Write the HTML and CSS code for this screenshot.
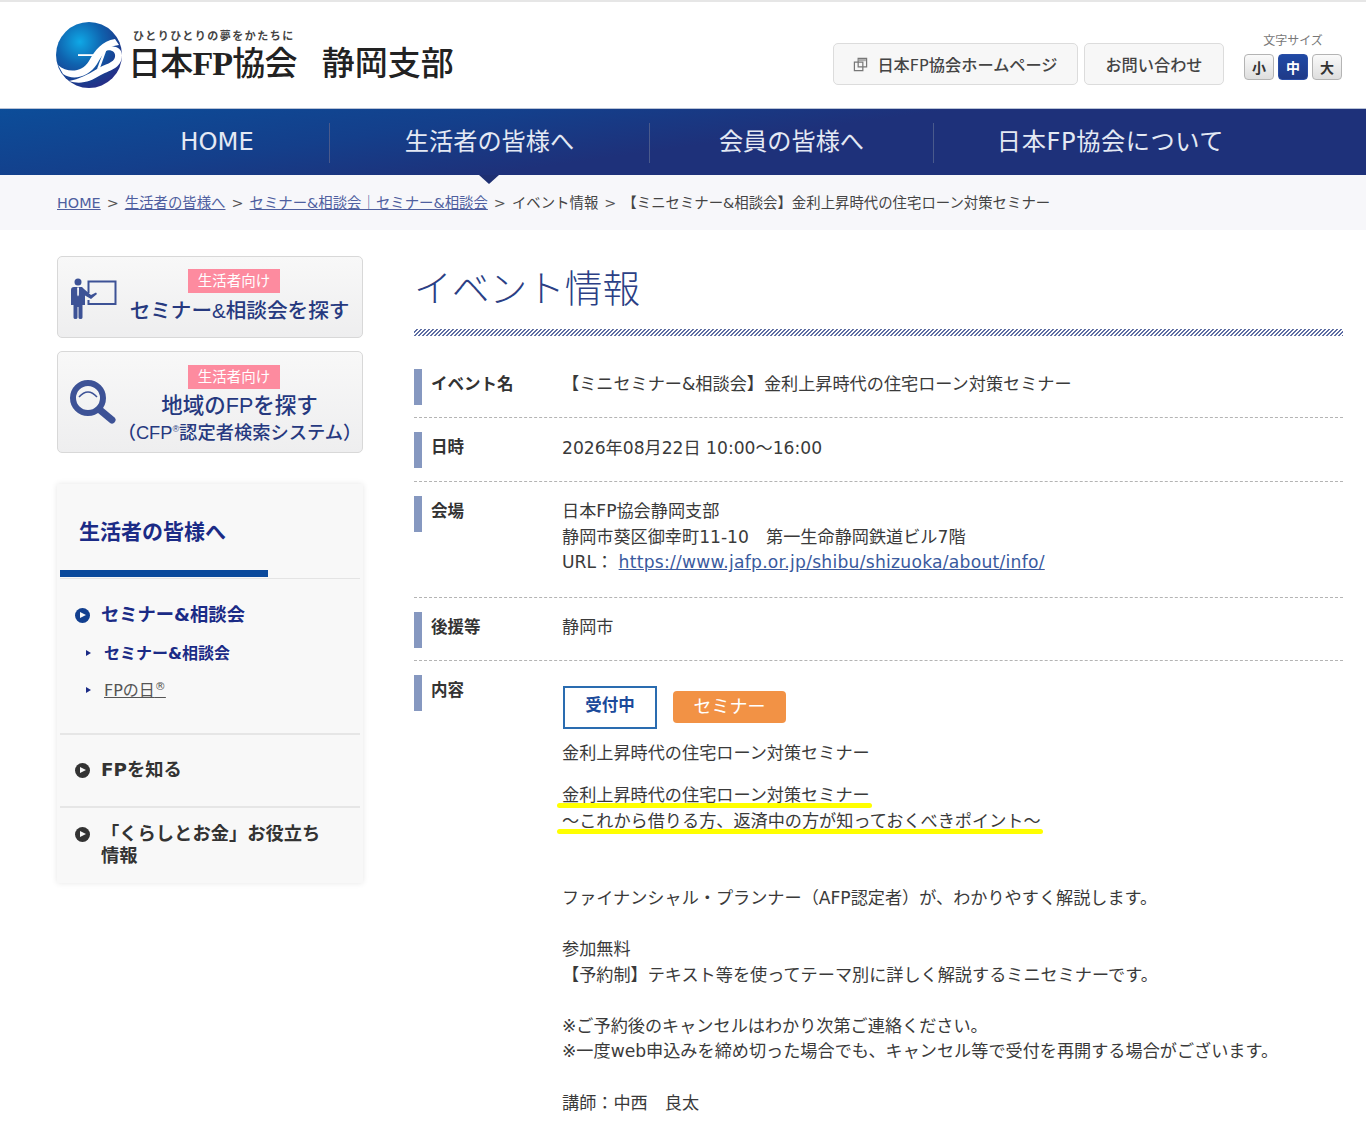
FILE: index.html
```html
<!DOCTYPE html>
<html lang="ja">
<head>
  <meta charset="UTF-8">
  <meta name="viewport" content="width=device-width, initial-scale=1.0">
  <title>イベント情報 | 日本FP協会 静岡支部</title>
  <link rel="stylesheet" href="styles.css">
</head>
<body>
  <header class="header">
    <a class="logo" href="#">
      <svg class="logo-mark" viewBox="0 0 68 68" width="68" height="68" aria-hidden="true">
        <defs>
          <radialGradient id="globe" cx="0.36" cy="0.3" r="0.78">
            <stop offset="0" stop-color="#0fa8e6"/>
            <stop offset="0.45" stop-color="#0f62ae"/>
            <stop offset="0.8" stop-color="#1b3a8c"/>
            <stop offset="1" stop-color="#2a2a86"/>
          </radialGradient>
        </defs>
        <circle cx="34" cy="34" r="33" fill="url(#globe)"/>
        <path d="M3 44 C12 52 27 52 34 40 C40 29 47 20 60 18 L64 24 C52 25 48 33 42 43 C34 56 18 60 8 53 Z" fill="#fff"/>
        <path d="M14 60 C26 64 36 60 44 55 C54 49 67 48 67 34 C67 27 60 24 53 26 L50 30 C56 28 61 31 60 36 C59 42 50 43 42 48 C32 54 24 58 14 60 Z" fill="#fff"/>
        <path d="M23 33.200 H46 V35 H23 Z" fill="#fff"/>
        <path d="M42 48 L49 29 L51.500 29 L45 47 Z" fill="#fff"/>
      </svg>
      <span class="logo-text">
        <span class="logo-catch">ひとりひとりの夢をかたちに</span>
        <span class="logo-name"><span class="logo-org">日本<span class="logo-fp">FP</span>協会</span><span class="logo-branch">静岡支部</span></span>
      </span>
    </a>
    <div class="header-tools">
      <a class="tool-btn tool-home" href="#">
        <svg viewBox="0 0 16 16" width="15" height="15" aria-hidden="true">
          <path d="M5.500 1.500h9v9h-9z M1.500 5.500h9v9h-9z" fill="none" stroke="#777" stroke-width="1.300"/>
          <path d="M6.200 2.200h7.600v2.300H6.200z" fill="#aaa"/>
        </svg>
        日本FP協会ホームページ
      </a>
      <a class="tool-btn tool-contact" href="#">お問い合わせ</a>
      <div class="font-size">
        <div class="font-size-label">文字サイズ</div>
        <div class="font-size-btns">
          <button class="size-btn">小</button>
          <button class="size-btn active">中</button>
          <button class="size-btn">大</button>
        </div>
      </div>
    </div>
  </header>

  <nav class="gnav">
    <a class="gnav-item gnav-home" href="#">HOME</a>
    <a class="gnav-item gnav-citizen current" href="#">生活者の皆様へ</a>
    <a class="gnav-item gnav-member" href="#">会員の皆様へ</a>
    <a class="gnav-item gnav-about" href="#">日本FP協会について</a>
  </nav>

  <div class="breadcrumb">
    <a href="#">HOME</a><span class="sep">&gt;</span><a href="#">生活者の皆様へ</a><span class="sep">&gt;</span><a href="#">セミナー&amp;相談会｜セミナー&amp;相談会</a><span class="sep">&gt;</span><span>イベント情報</span><span class="sep">&gt;</span><span>【ミニセミナー&amp;相談会】金利上昇時代の住宅ローン対策セミナー</span>
  </div>

  <div class="page">
    <aside class="side">
      <a class="side-btn side-btn-seminar" href="#">
        <svg class="side-icon" viewBox="0 0 48 44" width="48" height="44" aria-hidden="true">
          <circle cx="9" cy="7" r="3.500" fill="#3d5296"/>
          <path d="M2 15 Q2 12 5 12 H13 L15 14 L22 20 L27 17.500 L28 19 L22 24 L16 20.500 V30 H13.500 V42.500 Q13.500 44 11.500 44 Q9.500 44 9.500 42.500 V32 H8.500 V42.500 Q8.500 44 6.500 44 Q4.500 44 4.500 42.500 V30 H2 Z" fill="#3d5296"/>
          <path d="M8.200 12.500 H10 L9.800 20 L9 21.500 L8.300 20 Z" fill="#fff"/>
          <path d="M19.500 18 V6.500 H46.500 V29 H19.500 V25" fill="none" stroke="#3d5296" stroke-width="2"/>
        </svg>
        <span class="side-btn-body">
          <span class="side-tag">生活者向け</span>
          <span class="side-btn-title">セミナー&amp;相談会を探す</span>
        </span>
      </a>
      <a class="side-btn side-btn-search" href="#">
        <svg class="side-icon" viewBox="0 0 48 48" width="48" height="48" aria-hidden="true">
          <circle cx="19" cy="20" r="15" fill="none" stroke="#3d5296" stroke-width="6"/>
          <path d="M10 19 Q19 9 28 19" fill="none" stroke="#3d5296" stroke-width="1.500"/>
          <path d="M31 32 L43 42" stroke="#3d5296" stroke-width="7" stroke-linecap="round"/>
        </svg>
        <span class="side-btn-body">
          <span class="side-tag">生活者向け</span>
          <span class="side-btn-title">地域のFPを探す</span>
          <span class="side-btn-sub">（CFP<sup>®</sup>認定者検索システム）</span>
        </span>
      </a>

      <div class="side-menu">
        <h2 class="side-menu-title">生活者の皆様へ</h2>
        <div class="side-group side-group-open">
          <a class="side-link side-link-on" href="#">セミナー&amp;相談会</a>
          <ul class="side-sub">
            <li><a class="on" href="#">セミナー&amp;相談会</a></li>
            <li><a href="#">FPの日<sup>®</sup></a></li>
          </ul>
        </div>
        <div class="side-group">
          <a class="side-link" href="#">FPを知る</a>
        </div>
        <div class="side-group side-group-last">
          <a class="side-link" href="#">「くらしとお金」お役立ち情報</a>
        </div>
      </div>
    </aside>

    <main class="main">
      <h1 class="page-title">イベント情報</h1>
      <dl class="event">
        <div class="event-row event-row-name">
          <dt>イベント名</dt>
          <dd>【ミニセミナー&amp;相談会】金利上昇時代の住宅ローン対策セミナー</dd>
        </div>
        <div class="event-row event-row-date">
          <dt>日時</dt>
          <dd>2026年08月22日 10:00～16:00</dd>
        </div>
        <div class="event-row event-row-place">
          <dt>会場</dt>
          <dd>日本FP協会静岡支部<br>静岡市葵区御幸町11-10　第一生命静岡鉄道ビル7階<br>URL： <a href="#">https://www.jafp.or.jp/shibu/shizuoka/about/info/</a></dd>
        </div>
        <div class="event-row event-row-support">
          <dt>後援等</dt>
          <dd>静岡市</dd>
        </div>
        <div class="event-row event-row-body">
          <dt>内容</dt>
          <dd>
            <div class="tags">
              <span class="tag-status">受付中</span>
              <span class="tag-type">セミナー</span>
            </div>
            <p class="lead">金利上昇時代の住宅ローン対策セミナー</p>
            <p>
              <span class="marker">金利上昇時代の住宅ローン対策セミナー</span><br>
              <span class="marker">～これから借りる方、返済中の方が知っておくべきポイント～</span><br>
              <br>
              <br>
              ファイナンシャル・プランナー（AFP認定者）が、わかりやすく解説します。<br>
              <br>
              参加無料<br>
              【予約制】テキスト等を使ってテーマ別に詳しく解説するミニセミナーです。<br>
              <br>
              ※ご予約後のキャンセルはわかり次第ご連絡ください。<br>
              ※一度web申込みを締め切った場合でも、キャンセル等で受付を再開する場合がございます。<br>
              <br>
              講師：中西　良太
            </p>
          </dd>
        </div>
      </dl>
    </main>
  </div>
</body>
</html>
```

FILE: styles.css
```css
* {
  margin: 0;
  padding: 0;
  box-sizing: border-box;
}
body {
  font-family: "DejaVu Sans", "Noto Sans CJK JP", sans-serif;
  font-size: 17.150px;
  line-height: 25.6px;
  color: #3a3a3a;
  background: #fff;
  overflow: hidden;
}
a {
  color: inherit;
  text-decoration: none;
}

/* header */
.header {
  height: 108px;
  border-top: 2px solid #e6e6e6;
  display: flex;
  justify-content: space-between;
  padding: 0 24px 0 55px;
}
.logo {
  display: flex;
  align-items: flex-start;
  padding-top: 19px;
}
.logo-mark {
  flex: none;
}
.logo-text {
  display: flex;
  flex-direction: column;
  margin-left: 5px;
  color: #222;
}
.logo-catch {
  font-family: "Noto Sans CJK JP", sans-serif;
  font-size: 11px;
  line-height: 14px;
  font-weight: 700;
  color: #444;
  letter-spacing: 1.500px;
  margin: 7px 0 0 5px;
}
.logo-name {
  display: flex;
  font-family: "Liberation Serif", "Noto Sans CJK JP", serif;
  font-weight: 500;
  font-size: 33px;
  line-height: 38px;
  margin-top: 3px;
}
.logo-fp {
  font-size: 34px;
  font-weight: 700;
}
.logo-org {
  letter-spacing: -0.8px;
}
.logo-branch {
  margin-left: 25px;
}
.header-tools {
  display: flex;
  align-items: flex-start;
  padding-top: 41px;
}
.tool-btn {
  height: 42px;
  padding-top: 3px;
  display: flex;
  align-items: center;
  justify-content: center;
  background: #f7f7f7;
  border: 1.500px solid #dcdcdc;
  border-radius: 5px;
  font-size: 16.200px;
  font-weight: 500;
  color: #444;
}
.tool-home {
  width: 245px;
  gap: 9px;
  margin-right: 6px;
}
.tool-home svg {
  margin-top: -3px;
}
.tool-contact {
  width: 140px;
  margin-right: 20px;
}
.font-size {
  width: 98px;
  margin-top: -10px;
}
.font-size-label {
  font-size: 12px;
  line-height: 16px;
  color: #777;
  text-align: center;
}
.font-size-btns {
  display: flex;
  gap: 4px;
  margin-top: 5px;
}
.size-btn {
  width: 30px;
  height: 26px;
  font-family: "Noto Sans CJK JP", sans-serif;
  font-size: 14px;
  font-weight: 700;
  line-height: 1;
  color: #333;
  background: linear-gradient(#fafafa, #dedede);
  border: 1.500px solid #b4b4b4;
  border-radius: 4px;
}
.size-btn.active {
  color: #fff;
  background: linear-gradient(#1f49a5, #1f3a88);
  border-color: #2a4da5;
}

/* global nav */
.gnav {
  height: 67px;
  display: flex;
  padding: 14px 0 0 105px;
  border-top: 1px solid #b9c3d6;
  background: linear-gradient(172deg, #0c4d99 0, #143f8b 30%, #1e317a 52%, #1e317a 100%);
}
.gnav-item {
  position: relative;
  height: 40px;
  display: flex;
  align-items: center;
  justify-content: center;
  font-size: 24.200px;
  color: #e4e9f4;
  border-right: 1px solid #4a5a8c;
}
.gnav-home { width: 225px; }
.gnav-citizen { width: 320px; }
.gnav-member { width: 284px; }
.gnav-about { width: 353px; border-right: none; letter-spacing: 0.6px; }
.gnav-item.current::after {
  content: "";
  position: absolute;
  left: 149px;
  bottom: -21px;
  border-left: 10px solid transparent;
  border-right: 10px solid transparent;
  border-top: 9px solid #1e2f72;
}

/* breadcrumb */
.breadcrumb {
  height: 55px;
  padding: 2px 0 0 57px;
  display: flex;
  align-items: center;
  font-size: 14.400px;
  color: #444;
  background: #f7f7fa;
}
.breadcrumb a {
  color: #4f5f9f;
  text-decoration: underline;
}
.sep {
  margin: 0 6px;
  color: #555;
}

/* layout */
.page {
  display: flex;
  padding: 26px 23px 0 57px;
  gap: 51px;
}
.side {
  width: 306px;
  flex: none;
}
.main {
  flex: 1;
}

/* side buttons */
.side-btn {
  display: flex;
  align-items: center;
  width: 306px;
  margin-bottom: 13px;
  background: linear-gradient(#f8f8f8, #eeeeef);
  border: 1.500px solid #d8d8d8;
  border-radius: 5px;
  color: #26397f;
}
.side-btn-seminar {
  height: 82px;
}
.side-btn-search {
  height: 102px;
}
.side-icon {
  flex: none;
  margin-left: 11px;
}
.side-btn-body {
  flex: 1;
  display: flex;
  flex-direction: column;
  align-items: center;
  font-weight: 500;
  font-family: "Liberation Sans", "Noto Sans CJK JP", sans-serif;
}
.side-tag {
  width: 92px;
  height: 24px;
  line-height: 24px;
  margin-right: 11px;
  text-align: center;
  font-size: 14.500px;
  font-weight: 400;
  color: #fff;
  background: #fd8b9f;
}
.side-btn-title {
  font-size: 21.500px;
  line-height: 30px;
  white-space: nowrap;
}
.side-btn-seminar .side-btn-title {
  font-size: 20.600px;
  margin-top: 3px;
}
.side-btn-search .side-btn-body {
  padding-top: 5px;
}
.side-btn-search .side-tag {
  margin-bottom: 2px;
}
.side-btn-sub {
  font-size: 18.300px;
  line-height: 24px;
  white-space: nowrap;
}
.side-btn-sub sup {
  font-size: 9px;
  line-height: 0;
}

/* side menu */
.side-menu {
  margin-top: 31px;
  width: 306px;
  padding: 0 3px;
  background: #f8f8f8;
  box-shadow: 0 0 6px rgba(0, 0, 0, 0.1);
}
.side-menu-title {
  height: 95px;
  padding: 33px 0 0 19px;
  font-size: 21px;
  line-height: 30px;
  font-weight: 700;
  color: #1b2b86;
  border-bottom: 1px solid #e4e4e4;
  position: relative;
}
.side-menu-title::after {
  content: "";
  position: absolute;
  left: 0;
  bottom: 1px;
  width: 208px;
  height: 7px;
  background: #0b4a9c;
}
.side-group {
  padding: 24px 34px 25px 41px;
  border-bottom: 2px solid #e6e6e6;
}
.side-group-open {
  padding-top: 25px;
  padding-bottom: 16px;
}
.side-group-last {
  padding-top: 15px;
  padding-bottom: 16px;
  border-bottom: none;
}
.side-link {
  display: block;
  position: relative;
  font-size: 18.300px;
  line-height: 22px;
  font-weight: 700;
  color: #333;
}
.side-link::before {
  content: "";
  position: absolute;
  left: -26px;
  top: 4px;
  width: 15px;
  height: 15px;
  border-radius: 50%;
  background: #333;
}
.side-link::after {
  content: "";
  position: absolute;
  left: -21px;
  top: 8px;
  border-left: 6px solid #f8f8f8;
  border-top: 3.500px solid transparent;
  border-bottom: 3.500px solid transparent;
}
.side-link-on {
  color: #1b2b86;
}
.side-link-on::before {
  background: #123f8f;
}
.side-sub {
  list-style: none;
  margin-top: 17px;
}
.side-sub li {
  position: relative;
  font-size: 16px;
  line-height: 22px;
  margin-bottom: 15px;
  margin-left: 3px;
}
.side-sub li::before {
  content: "";
  position: absolute;
  left: -18px;
  top: 7px;
  border-left: 5px solid #1b2b86;
  border-top: 3.500px solid transparent;
  border-bottom: 3.500px solid transparent;
}
.side-sub a {
  color: #555;
  text-decoration: underline;
}
.side-sub a.on {
  color: #1b2b86;
  font-weight: 700;
  text-decoration: none;
}
.side-sub sup {
  font-size: 11px;
  line-height: 0;
}

/* main */
.page-title {
  height: 86px;
  margin-top: -6px;
  font-size: 37.700px;
  line-height: 79px;
  font-weight: 300;
  color: #2b3f85;
}
.page-title::after {
  content: "";
  display: block;
  height: 7px;
  background: linear-gradient(135deg, #fff 25%, #5d6da3 25%, #5d6da3 50%, #fff 50%, #fff 75%, #5d6da3 75%) 0 0 / 4px 4px;
}
.event-row {
  display: flex;
  padding: 14px 0 13px;
  border-bottom: 1px dashed #b4b4b4;
}
.event-row-name {
  padding-top: 33px;
  padding-bottom: 12px;
}
.event-row dt {
  flex: none;
  width: 148px;
  height: 36px;
  padding: 3px 0 0 9px;
  border-left: 8px solid #8698c0;
  font-weight: 700;
  font-size: 16.500px;
  line-height: 26px;
  color: #333;
}
.event-row dd {
  flex: 1;
  padding-top: 3px;
}
.event-row dd a {
  color: #3a5a9e;
  text-decoration: underline;
  letter-spacing: 0.25px;
}
.event-row-date dd {
  padding-top: 4px;
}
.event-row-place {
  padding-bottom: 21px;
}
.event-row-support {
  padding-bottom: 12px;
}
.event-row-body {
  border-bottom: none;
  padding-bottom: 0;
}
.event-row-body dd {
  padding-top: 11px;
}
.tags {
  display: flex;
  align-items: center;
  gap: 16px;
  margin-left: 1px;
}
.tag-status {
  width: 94px;
  height: 43px;
  line-height: 35px;
  text-align: center;
  font-size: 16.500px;
  font-weight: 700;
  color: #1b4a9a;
  background: #fff;
  border: 2px solid #2a6cb0;
}
.tag-type {
  width: 113px;
  height: 32px;
  line-height: 31px;
  text-align: center;
  font-size: 18px;
  color: #fff;
  background: #f29245;
  border-radius: 4px;
}
.lead {
  margin: 12px 0 17px;
}
.marker {
  position: relative;
}
.marker::after {
  content: "";
  position: absolute;
  left: -5px;
  right: -2px;
  bottom: -3px;
  height: 5px;
  border-radius: 2.500px;
  background: #ffff00;
}
```
